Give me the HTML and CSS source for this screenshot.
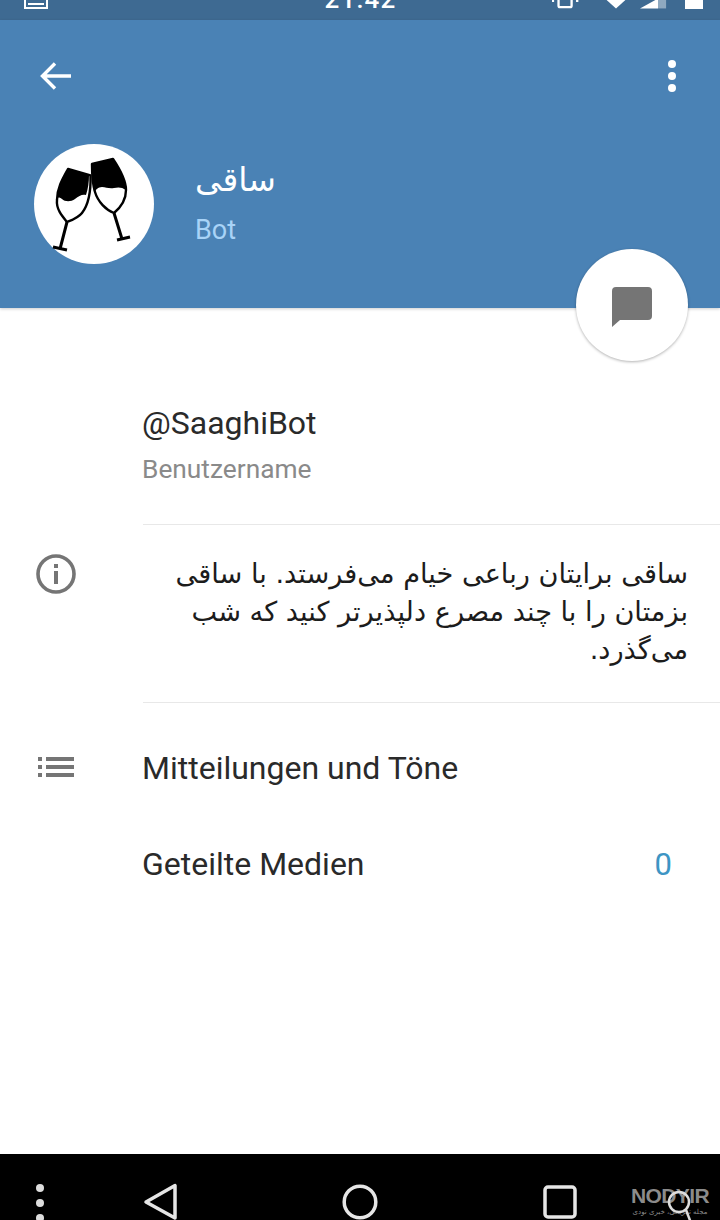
FILE: index.html
```html
<!DOCTYPE html>
<html lang="de">
<head>
  <meta charset="UTF-8">
  <meta name="viewport" content="width=device-width, initial-scale=1.0">
  <title>Saaghi Bot</title>
  <link rel="stylesheet" href="styles.css">
</head>
<body>
<div class="phone">

  <div class="statusbar">
    <div class="st-left">
      <svg width="24" height="9" viewBox="0 0 24 9"><path d="M1 0v8h22V0M4 4h16" fill="none" stroke="#fff" stroke-width="2"/></svg>
    </div>
    <span class="clock">21:42</span>
    <div class="st-right">
      <svg width="28" height="12" viewBox="0 0 30 12"><path d="M7 0v9a1.500 1.500 0 0 0 1.500 1.500h11A1.500 1.500 0 0 0 21 9V0M1 2v3M27 2v3" fill="none" stroke="#fff" stroke-width="2.500"/></svg>
      <svg class="st-wifi" width="20" height="10" viewBox="0 0 22 10"><path d="M0 0h22L11 10z" fill="#fff"/></svg>
      <svg class="st-signal" width="27" height="11" viewBox="0 0 30 11"><path d="M0 11L20 0v11z" fill="#fff"/><path d="M20 0h9v11h-9z" fill="#8fa9c0"/></svg>
      <div class="battery"></div>
    </div>
  </div>

  <header class="profile">
    <div class="toolbar">
      <svg width="36" height="36" viewBox="0 0 36 36"><path d="M33 18H6M17 5.500L4.500 18 17 30.500" fill="none" stroke="#fff" stroke-width="3.400"/></svg>
      <div class="dots">
        <span></span><span></span><span></span>
      </div>
    </div>
    <div class="who">
      <div class="avatar">
        <svg width="120" height="120" viewBox="0 0 120 120">
          <path d="M34 25L55 31C55 38 54 45 52 51C48 50 45 52 41 55C37 58 31 58 28 55C26 53 24 53 23 55C24 44 29 34 34 25z" fill="#000"/>
          <path d="M34 25L56.500 31.500C57 48 55 60 48 69C44 74 38 76 33 78C28 72 22 65 23 56C23 44 29 34 34 25z" fill="none" stroke="#000" stroke-width="2.400" stroke-linejoin="round"/>
          <path d="M33 78L26 105M19 103L33 106" fill="none" stroke="#000" stroke-width="3"/>
          <path d="M58 20L79 15C85 24 92 36 92 46C88 43 84 43 80 44C75 45 72 43 68 43C64 43 62 46 60 48C58 38 58 30 58 20z" fill="#000"/>
          <path d="M58 20L79 15C85 24 92 36 92 46C92 56 86 64 80 69C72 66 64 58 61 48C58 38 58 30 58 20z" fill="none" stroke="#000" stroke-width="2.400" stroke-linejoin="round"/>
          <path d="M80 69L88 95M83 96L96 93" fill="none" stroke="#000" stroke-width="3"/>
        </svg>
      </div>
      <div class="who-text">
        <div class="who-name" dir="rtl">ساقی</div>
        <div class="who-sub">Bot</div>
      </div>
    </div>
  </header>

  <div class="fab">
    <svg width="40" height="40" viewBox="0 0 40 40"><path d="M4 0h32a4 4 0 0 1 4 4v25a4 4 0 0 1-4 4H8L0 40V4a4 4 0 0 1 4-4z" fill="#757575"/></svg>
  </div>

  <main class="content">
    <section class="block block-user">
      <div class="user-name">@SaaghiBot</div>
      <div class="user-label">Benutzername</div>
    </section>

    <section class="block block-about">
      <svg class="row-icon" width="40" height="40" viewBox="0 0 40 40">
        <circle cx="20" cy="20" r="18" fill="none" stroke="#757575" stroke-width="3.600"/>
        <path d="M18 10h4v4h-4zM18 17h4v13h-4z" fill="#757575"/>
      </svg>
      <p class="about" dir="rtl">ساقی برایتان رباعی خیام می‌فرستد. با ساقی بزمتان را با چند مصرع دلپذیرتر کنید که شب می‌گذرد.</p>
    </section>

    <section class="links">
      <div class="link-row">
        <svg class="row-icon" width="40" height="40" viewBox="0 0 40 40">
          <path d="M2 10h4v4H2zM10 10h28v4H10zM2 18h4v4H2zM10 18h28v4H10zM2 26h4v4H2zM10 26h28v4H10z" fill="#757575"/>
        </svg>
        <span class="link-text">Mitteilungen und Töne</span>
      </div>
      <div class="link-row">
        <span class="link-text">Geteilte Medien</span>
        <span class="count">0</span>
      </div>
    </section>
  </main>

  <nav class="navbar">
    <div class="nav-dots"><span></span><span></span><span></span></div>
    <svg class="nav-back" width="36" height="38" viewBox="0 0 36 38"><path d="M32 2.500V35L3 19z" fill="none" stroke="#e6e6e6" stroke-width="3.500" stroke-linejoin="round"/></svg>
    <svg class="nav-home" width="36" height="36" viewBox="0 0 36 36"><circle cx="18" cy="18" r="15.800" fill="none" stroke="#e6e6e6" stroke-width="3.500"/></svg>
    <svg class="nav-recent" width="34" height="34" viewBox="0 0 34 34"><rect x="2" y="2" width="30" height="30" rx="3" fill="none" stroke="#e6e6e6" stroke-width="3.500"/></svg>
  </nav>

  <div class="mark">
    <div class="mark-name">NODYIR</div>
    <div class="mark-sub" dir="rtl">مجله تفریحی، خبری نودی</div>
  </div>
  <svg class="mark-lens" width="34" height="46" viewBox="0 0 34 46"><circle cx="13" cy="12" r="10" fill="none" stroke="#ddd" stroke-width="2.500"/><path d="M20 20L30 46" stroke="#ddd" stroke-width="2.500"/></svg>

</div>
</body>
</html>
```

FILE: styles.css
```css
html, body {
  margin: 0;
  padding: 0;
}
body {
  font-family: Roboto, "DejaVu Sans", sans-serif;
  background-color: #fff;
}
.phone {
  position: relative;
  width: 720px;
  height: 1220px;
  overflow: hidden;
  display: flex;
  flex-direction: column;
}

/* status bar, cut off at the top in the original */
.statusbar {
  height: 20px;
  flex: none;
  background-color: #3e6a92;
  color: #fff;
  display: flex;
  align-items: flex-end;
  padding: 0 17px 11px;
  box-sizing: border-box;
  overflow: hidden;
}
.st-left {
  flex: 1 1 0;
  padding-left: 7px;
  line-height: 0;
}
.clock {
  flex: none;
  font-size: 26px;
  font-weight: 500;
  line-height: 26px;
  letter-spacing: 1.200px;
  margin: 0 6px -3px 0;
}
.st-right {
  flex: 1 1 0;
  display: flex;
  align-items: flex-end;
  justify-content: flex-end;
}
.st-wifi {
  margin-left: 26px;
}
.st-signal {
  margin-left: 14px;
}
.battery {
  width: 18px;
  height: 11px;
  margin-left: 18px;
  background-color: #fff;
}

/* blue header */
.profile {
  position: relative;
  height: 288px;
  flex: none;
  background-color: #4a82b5;
  padding: 38px 44px 0 38px;
  box-sizing: border-box;
  box-shadow: 0 1px 3px rgba(0, 0, 0, 0.2);
}
.toolbar {
  display: flex;
  justify-content: space-between;
  align-items: center;
  height: 36px;
}
.dots {
  display: flex;
  flex-direction: column;
  gap: 4px;
}
.dots span {
  width: 8px;
  height: 8px;
  border-radius: 50%;
  background-color: #fff;
}
.who {
  display: flex;
  align-items: center;
  margin: 50px 0 0 -4px;
  gap: 41px;
}
.avatar {
  width: 120px;
  height: 120px;
  border-radius: 50%;
  background-color: #fff;
  flex: none;
}
.who-name {
  font-family: "DejaVu Sans", sans-serif;
  font-size: 33px;
  line-height: 44px;
  color: #fff;
  text-align: left;
  margin-top: -2px;
}
.who-sub {
  font-size: 27px;
  line-height: 36px;
  margin-top: 10px;
  color: #a8d3f7;
}

.fab {
  position: absolute;
  left: 576px;
  top: 249px;
  z-index: 2;
  width: 112px;
  height: 112px;
  border-radius: 50%;
  background-color: #fff;
  box-shadow: 0 1px 3px rgba(0, 0, 0, 0.3);
  display: flex;
  align-items: center;
  justify-content: center;
}
.fab svg {
  margin-top: 4px;
}

/* rows */
.content {
  flex: 1;
  padding-left: 143px;
}
.block {
  border-bottom: 1px solid #e8e8e8;
}
.block-user {
  height: 217px;
  box-sizing: border-box;
  padding-top: 96px;
}
.user-name {
  font-size: 32px;
  line-height: 38px;
  margin-left: -1px;
  color: #2a2a2a;
}
.user-label {
  font-size: 26.300px;
  line-height: 30px;
  margin: 12px 0 0 -1px;
  color: #8a8a8a;
}
.block-about {
  position: relative;
  height: 178px;
  box-sizing: border-box;
  padding: 30px 32px 0 0;
}
.row-icon {
  position: absolute;
  left: -107px;
  top: 29px;
}
.about {
  margin: 0;
  font-family: "DejaVu Sans", sans-serif;
  font-size: 27.200px;
  line-height: 38px;
  color: #1c1c1c;
}
.link-row {
  position: relative;
  height: 96px;
  display: flex;
  align-items: center;
  justify-content: space-between;
  padding-right: 48px;
}
.links {
  padding-top: 17px;
}
.link-row .row-icon {
  top: 27px;
}
.link-text {
  font-size: 32px;
  margin-left: -1px;
  color: #2a2a2a;
}
.count {
  font-size: 31px;
  color: #3d95c4;
}

/* bottom nav */
.navbar {
  position: relative;
  height: 66px;
  flex: none;
  background-color: #000;
  overflow: hidden;
}
.navbar svg, .nav-dots {
  position: absolute;
}
.nav-dots {
  left: 36px;
  top: 30px;
  display: flex;
  flex-direction: column;
  gap: 7px;
}
.nav-dots span {
  width: 8px;
  height: 8px;
  border-radius: 50%;
  background-color: #ddd;
}
.nav-back {
  left: 143px;
  top: 29px;
}
.nav-home {
  left: 342px;
  top: 30px;
}
.nav-recent {
  left: 543px;
  top: 31px;
}

/* watermark over the nav bar */
.mark {
  position: absolute;
  left: 628px;
  top: 1185px;
  width: 84px;
  text-align: center;
  color: #8b8b8b;
}
.mark-name {
  font-family: "Liberation Sans", sans-serif;
  font-size: 21px;
  font-weight: 700;
  line-height: 22px;
  letter-spacing: -0.6px;
}
.mark-sub {
  font-family: "DejaVu Sans", sans-serif;
  font-size: 7px;
  line-height: 10px;
  white-space: nowrap;
}
.mark-lens {
  position: absolute;
  left: 666px;
  top: 1190px;
}
```
